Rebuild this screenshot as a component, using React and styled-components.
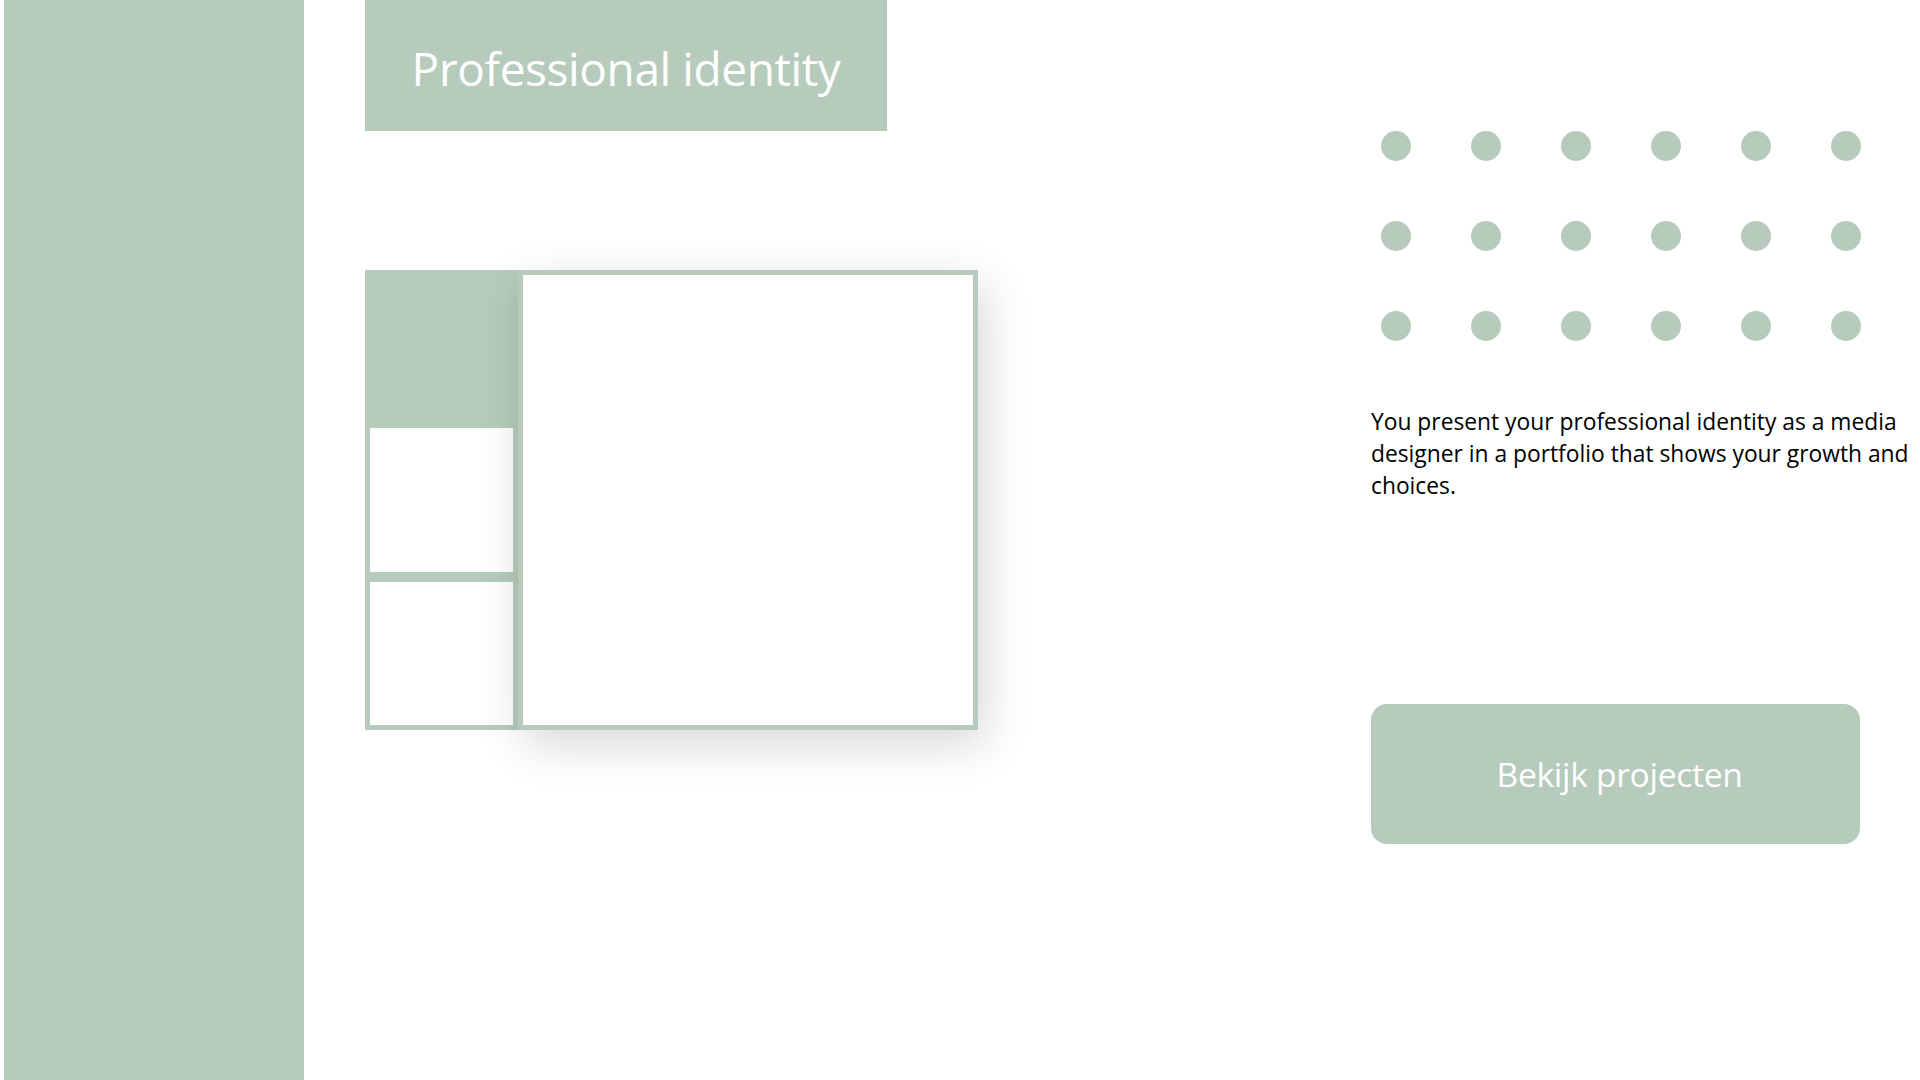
import React from 'react';
import styled, { createGlobalStyle } from 'styled-components';

const sage = '#b6cbbc';

const GlobalStyle = createGlobalStyle`
  html, body {
    margin: 0;
    padding: 0;
    background: #fff;
  }
  body {
    font-family: 'Open Sans', 'Noto Sans', sans-serif;
    color: #000;
  }
`;

const Page = styled.div`
  display: flex;
  width: 1920px;
  height: 1080px;
  overflow: hidden;
`;

const Sidebar = styled.aside`
  flex: 0 0 300px;
  margin-left: 4px;
  background: ${sage};
`;

const Main = styled.main`
  flex: 0 0 1006px;
  padding-left: 61px;
  display: flex;
  flex-direction: column;
  align-items: flex-start;
`;

const TitleBox = styled.div`
  width: 522px;
  height: 131px;
  box-sizing: border-box;
  background: ${sage};
  display: flex;
  align-items: center;
  justify-content: center;
`;

const Title = styled.h1`
  margin: 4px 0 0;
  font-size: 46px;
  font-weight: 400;
  color: #fff;
  letter-spacing: -0.4px;
`;

const Collage = styled.div`
  margin-top: 139px;
  display: flex;
  height: 460px;
`;

const ThumbColumn = styled.div`
  width: 153px;
  display: flex;
  flex-direction: column;
`;

const Thumb = styled.div`
  flex: 1;
  box-sizing: border-box;
  border: 5px solid ${sage};
  background: ${props => (props.filled ? sage : '#fff')};
`;

const Preview = styled.div`
  position: relative;
  z-index: 1;
  width: 460px;
  height: 460px;
  box-sizing: border-box;
  border: 5px solid ${sage};
  background: #fff;
  box-shadow: 6px 14px 44px rgba(0, 0, 0, 0.16);
`;

const Aside = styled.section`
  flex: 1;
  padding-top: 131px;
  display: flex;
  flex-direction: column;
  align-items: flex-start;
`;

const DotGrid = styled.div`
  margin-left: 10px;
  display: grid;
  grid-template-columns: repeat(6, 30px);
  grid-auto-rows: 30px;
  gap: 60px;
`;

const Dot = styled.span`
  width: 30px;
  height: 30px;
  border-radius: 50%;
  background: ${sage};
`;

const Intro = styled.p`
  margin: 65px 0 0;
  width: 549px;
  font-size: 22.8px;
  line-height: 32px;
  color: #000;
`;

const Button = styled.button`
  margin-top: 202px;
  width: 489px;
  height: 140px;
  border: 0;
  border-radius: 16px;
  background: ${sage};
  color: #fff;
  font-family: 'Open Sans', 'Noto Sans', sans-serif;
  font-size: 33.6px;
  font-weight: 400;
  letter-spacing: -0.3px;
  cursor: pointer;
  padding: 0 0 0 8px;
`;

const dots = Array.from({ length: 18 });

const App = () => (
  <>
    <GlobalStyle />
    <Page>
      <Sidebar />
      <Main>
        <TitleBox>
          <Title>Professional identity</Title>
        </TitleBox>
        <Collage>
          <ThumbColumn>
            <Thumb filled />
            <Thumb />
            <Thumb />
          </ThumbColumn>
          <Preview />
        </Collage>
      </Main>
      <Aside>
        <DotGrid>
          {dots.map((_, i) => (
            <Dot key={`dot_${i}`} />
          ))}
        </DotGrid>
        <Intro>
          You present your professional identity as a media designer in a
          portfolio that shows your growth and choices.
        </Intro>
        <Button>Bekijk projecten</Button>
      </Aside>
    </Page>
  </>
);

export default App;
